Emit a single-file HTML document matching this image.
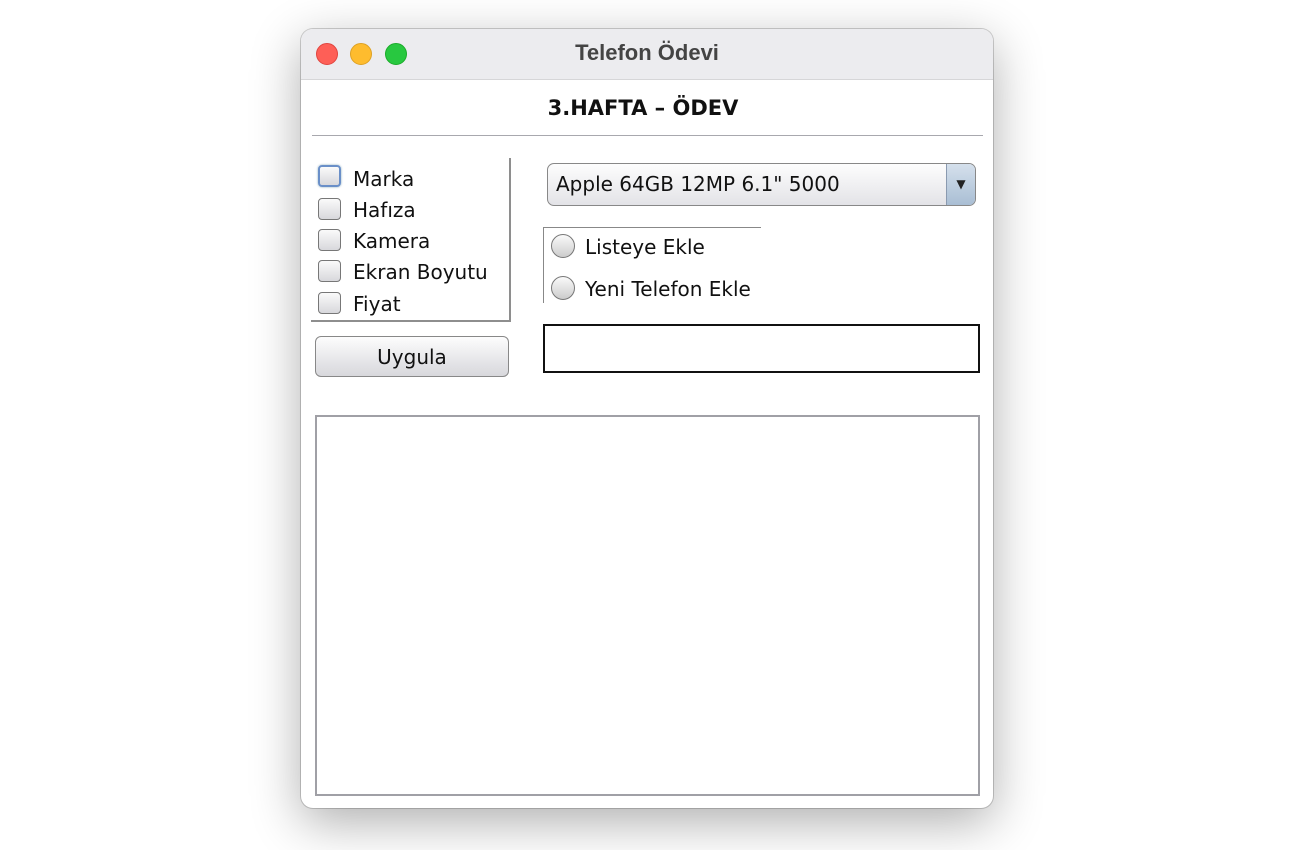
<!DOCTYPE html>
<html><head><style>
body{margin:0;width:1300px;height:850px;background:#fff;position:relative;font-family:"DejaVu Sans","Liberation Sans",sans-serif;overflow:hidden}
.win{position:absolute;left:301px;top:29px;width:692px;height:779px;border-radius:12px;background:#fff;box-shadow:0 14px 50px rgba(0,0,0,.32),0 0 0 1px rgba(0,0,0,.18);overflow:hidden}
.tb{position:absolute;left:0;top:0;right:0;height:50px;background:#ececef;border-bottom:1px solid #d6d6d8}
.dot{position:absolute;top:14px;width:20px;height:20px;border-radius:50%}
.title{position:absolute;left:0;right:0;top:11px;text-align:center;font:bold 22px "Liberation Sans",sans-serif;color:#444}
.a{position:absolute}
.cb{position:absolute;left:17px;width:23px;height:22px;border:1px solid #777;border-radius:4px;background:linear-gradient(#fafafa,#d8d8dc);box-sizing:border-box}
.lbl{position:absolute;left:52px;font-size:20px;color:#111}
.rb{position:absolute;left:250px;width:24px;height:24px;border:1px solid #777;border-radius:50%;background:linear-gradient(#fafafa,#ccc);box-sizing:border-box}
</style></head><body>
<div class="win">
<div class="tb">
<div class="dot" style="left:15px;background:#fe5f57;border:0.5px solid #e0443e"></div>
<div class="dot" style="left:49px;background:#febc2e;border:0.5px solid #dea123"></div>
<div class="dot" style="left:84px;background:#28c840;border:0.5px solid #1aab29"></div>
<div class="title">Telefon Ödevi</div>
</div>
<div class="a" style="left:-8px;right:0;top:67px;text-align:center;font-weight:bold;font-size:21px;color:#111">3.HAFTA – ÖDEV</div>
<div class="a" style="left:11px;top:106px;width:671px;height:1px;background:#a8a8ae"></div>
<div class="a" style="left:10px;top:129px;width:198px;height:162px;border-right:2px solid #8e8e8e;border-bottom:2px solid #8e8e8e"></div>
<div class="cb" style="top:136px;border:2px solid #6a8fc8;box-shadow:0 0 2px #8ab"></div><div class="lbl" style="top:138px">Marka</div>
<div class="cb" style="top:169px"></div><div class="lbl" style="top:169px">Hafıza</div>
<div class="cb" style="top:200px"></div><div class="lbl" style="top:200px">Kamera</div>
<div class="cb" style="top:231px"></div><div class="lbl" style="top:231px">Ekran Boyutu</div>
<div class="cb" style="top:263px"></div><div class="lbl" style="top:263px">Fiyat</div>
<div class="a" style="left:14px;top:307px;width:194px;height:41px;border:1px solid #888;border-radius:6px;box-sizing:border-box;background:linear-gradient(#fdfdfd,#e6e6e9 60%,#d8d8dc);text-align:center;line-height:41px;font-size:20px;color:#111">Uygula</div>
<div class="a" style="left:246px;top:134px;width:429px;height:43px;border:1px solid #888;border-radius:7px;box-sizing:border-box;background:linear-gradient(#fdfdfd,#e3e3e7);font-size:20px;line-height:41px;padding-left:8px;color:#111;overflow:hidden">Apple 64GB 12MP 6.1" 5000
<div style="position:absolute;right:0;top:0;width:28px;height:41px;border-left:1px solid #8a9ab0;background:linear-gradient(#d5e0ec,#a9bed4);text-align:center;font-size:12px;line-height:41px;padding:0;color:#222">▼</div></div>
<div class="a" style="left:242px;top:198px;width:217px;height:75px;border-left:1px solid #888;border-top:1px solid #888"></div>
<div class="rb" style="top:205px"></div><div class="lbl" style="left:284px;top:206px">Listeye Ekle</div>
<div class="rb" style="top:247px"></div><div class="lbl" style="left:284px;top:248px">Yeni Telefon Ekle</div>
<div class="a" style="left:242px;top:295px;width:437px;height:49px;border:2px solid #111;box-sizing:border-box"></div>
<div class="a" style="left:14px;top:386px;width:665px;height:381px;border:2px solid #a0a0a6;box-sizing:border-box"></div>
</div>
</body></html>
